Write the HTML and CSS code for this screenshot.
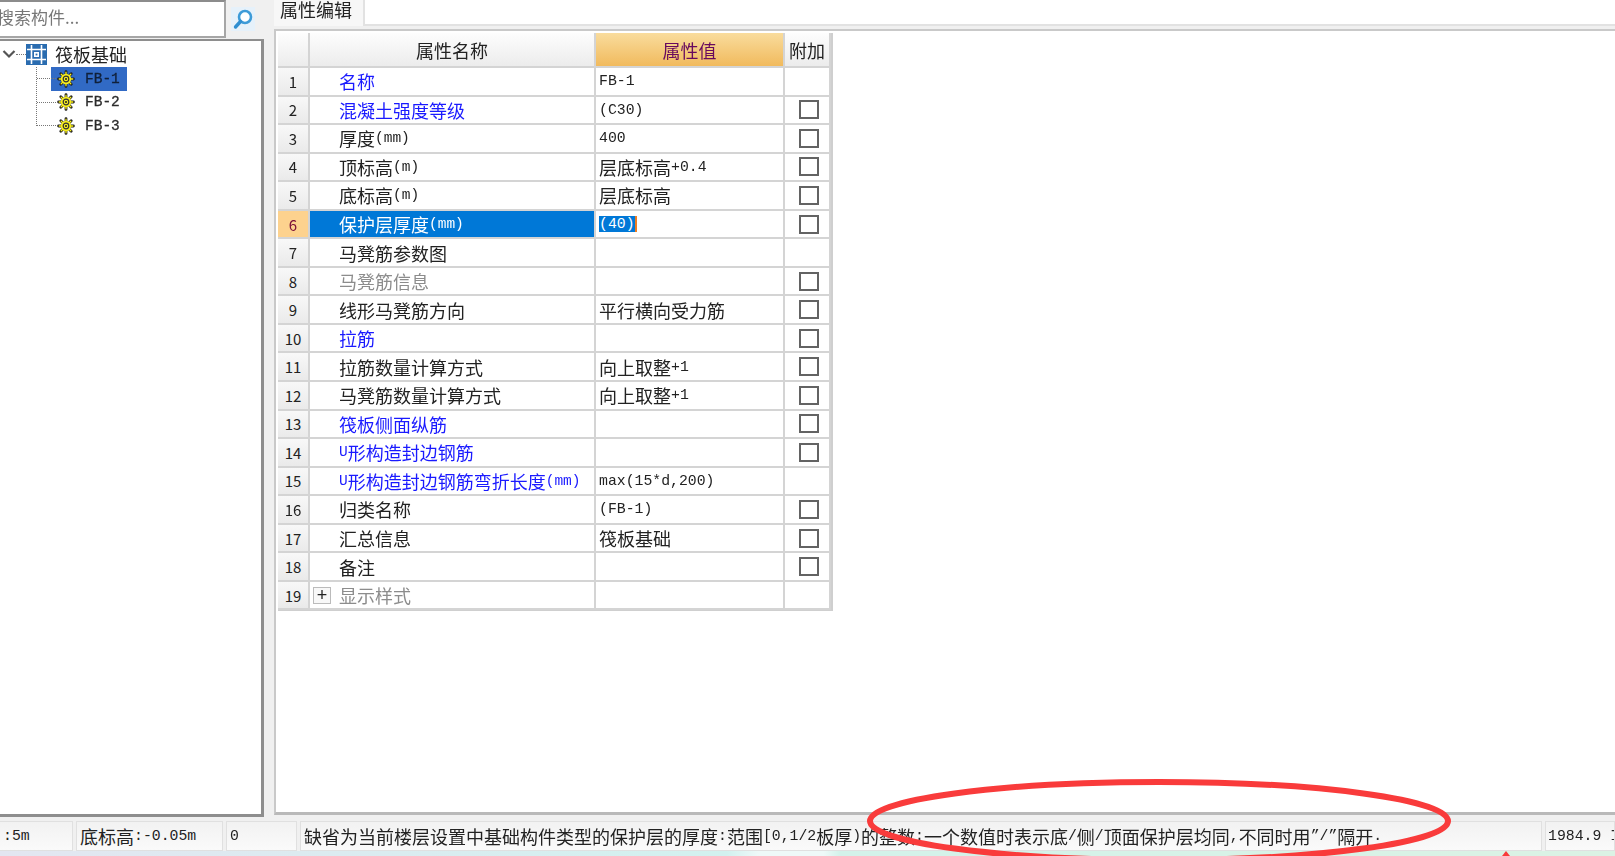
FILE: index.html
```html
<!DOCTYPE html>
<html lang="zh-CN">
  <head>
    <meta charset="UTF-8" />
    <title>属性编辑</title>
    <link rel="stylesheet" href="styles.css">
  </head>
  <body>
    <svg class="defs" width="0" height="0">
      <symbol id="gear" viewBox="0 0 18 18">
        <g stroke="#1a1a1a" stroke-width="2.8" stroke-linecap="round">
          <path d="M9 1.6v14.8M1.6 9h14.8M3.8 3.8l10.4 10.4M14.2 3.8L3.8 14.2" />
        </g>
        <g stroke="#f7ee1e" stroke-width="1.3" stroke-linecap="round">
          <path d="M9 2.2v13.6M2.2 9h13.6M4.2 4.2l9.6 9.6M13.8 4.2l-9.6 9.6" />
        </g>
        <circle cx="9" cy="9" r="5.2" fill="#f7ee1e" />
        <circle cx="9" cy="9" r="2.8" fill="none" stroke="#333" stroke-width="1.2" />
        <circle cx="9" cy="9" r="1" fill="#1a1a1a" />
      </symbol>
    </svg>

    <div class="app">
      <div class="main">
        <div class="side">
          <div class="search-bar">
            <div class="search-input">搜索构件...</div>
            <svg class="search-icon" width="24" height="24" viewBox="0 0 24 24">
              <rect width="24" height="24" fill="#e6f1fa" />
              <circle cx="14" cy="10" r="6" fill="#fff" stroke="#3d9bd8" stroke-width="2.6" />
              <path d="M9.5 14.5L4.5 20" stroke="#2f8ed0" stroke-width="3.4" stroke-linecap="round" />
            </svg>
          </div>
          <div class="tree">
            <div class="tree-root">
              <svg class="chevron" width="14" height="10" viewBox="0 0 14 10">
                <path d="M1.5 2L7 7.5L12.5 2" fill="none" stroke="#555" stroke-width="2.2" />
              </svg>
              <span class="dots-short"></span>
              <svg class="root-icon" width="21" height="21" viewBox="0 0 21 21">
                <rect width="21" height="21" fill="#2a6cb0" />
                <path d="M1 5.5h19M1 15.5h19M5.5 1v19M15.5 1v19" stroke="#fff" stroke-width="1.6" />
                <path d="M8 8h5v5H8z" fill="#fff" />
                <path d="M9.6 9.6h1.8v1.8H9.6z" fill="#2a6cb0" />
              </svg>
              <span class="root-label">筏板基础</span>
            </div>
            <ul class="tree-list">
              <li class="tree-item selected">
                <svg class="gear" width="18" height="18"><use href="#gear" /></svg>
                <span>FB-1</span>
              </li>
              <li class="tree-item">
                <svg class="gear" width="18" height="18"><use href="#gear" /></svg>
                <span>FB-2</span>
              </li>
              <li class="tree-item">
                <svg class="gear" width="18" height="18"><use href="#gear" /></svg>
                <span>FB-3</span>
              </li>
            </ul>
          </div>
        </div>

        <div class="panel">
          <div class="tabs">
            <div class="tab">属性编辑</div>
          </div>
          <div class="sheet">
            <div class="prop-table">
              <div class="hd"></div>
              <div class="hd">属性名称</div>
              <div class="hd hd-active">属性值</div>
              <div class="hd">附加</div>

              <div class="num">1</div>
              <div class="name blue">名称</div>
              <div class="val lat">FB-1</div>
              <div class="extra"></div>

              <div class="num">2</div>
              <div class="name blue">混凝土强度等级</div>
              <div class="val lat">(C30)</div>
              <div class="extra"><i class="check"></i></div>

              <div class="num">3</div>
              <div class="name">厚度<span class="unit">(mm)</span></div>
              <div class="val lat">400</div>
              <div class="extra"><i class="check"></i></div>

              <div class="num">4</div>
              <div class="name">顶标高<span class="unit">(m)</span></div>
              <div class="val">层底标高<span class="lat">+0.4</span></div>
              <div class="extra"><i class="check"></i></div>

              <div class="num">5</div>
              <div class="name">底标高<span class="unit">(m)</span></div>
              <div class="val">层底标高</div>
              <div class="extra"><i class="check"></i></div>

              <div class="num num-active">6</div>
              <div class="name name-active">保护层厚度<span class="unit">(mm)</span></div>
              <div class="val lat"><span class="picked">(40)</span></div>
              <div class="extra"><i class="check"></i></div>

              <div class="num">7</div>
              <div class="name">马凳筋参数图</div>
              <div class="val"></div>
              <div class="extra"></div>

              <div class="num">8</div>
              <div class="name gray">马凳筋信息</div>
              <div class="val"></div>
              <div class="extra"><i class="check"></i></div>

              <div class="num">9</div>
              <div class="name">线形马凳筋方向</div>
              <div class="val">平行横向受力筋</div>
              <div class="extra"><i class="check"></i></div>

              <div class="num">10</div>
              <div class="name blue">拉筋</div>
              <div class="val"></div>
              <div class="extra"><i class="check"></i></div>

              <div class="num">11</div>
              <div class="name">拉筋数量计算方式</div>
              <div class="val">向上取整<span class="lat">+1</span></div>
              <div class="extra"><i class="check"></i></div>

              <div class="num">12</div>
              <div class="name">马凳筋数量计算方式</div>
              <div class="val">向上取整<span class="lat">+1</span></div>
              <div class="extra"><i class="check"></i></div>

              <div class="num">13</div>
              <div class="name blue">筏板侧面纵筋</div>
              <div class="val"></div>
              <div class="extra"><i class="check"></i></div>

              <div class="num">14</div>
              <div class="name blue"><span class="unit">U</span>形构造封边钢筋</div>
              <div class="val"></div>
              <div class="extra"><i class="check"></i></div>

              <div class="num">15</div>
              <div class="name blue"><span class="unit">U</span>形构造封边钢筋弯折长度<span class="unit">(mm)</span></div>
              <div class="val lat">max(15*d,200)</div>
              <div class="extra"></div>

              <div class="num">16</div>
              <div class="name">归类名称</div>
              <div class="val lat">(FB-1)</div>
              <div class="extra"><i class="check"></i></div>

              <div class="num">17</div>
              <div class="name">汇总信息</div>
              <div class="val">筏板基础</div>
              <div class="extra"><i class="check"></i></div>

              <div class="num">18</div>
              <div class="name">备注</div>
              <div class="val"></div>
              <div class="extra"><i class="check"></i></div>

              <div class="num">19</div>
              <div class="name gray name-expand"><span class="expander">+</span>显示样式</div>
              <div class="val"></div>
              <div class="extra"></div>
            </div>
          </div>
        </div>
      </div>

      <div class="status">
        <div class="st st-1"><span class="lat">:5m</span></div>
        <div class="st st-2">底标高<span class="lat">:-0.05m</span></div>
        <div class="st st-3"><span class="lat">0</span></div>
        <div class="st st-4">缺省为当前楼层设置中基础构件类型的保护层的厚度<span class="lat">:</span>范围<span class="lat">[0,1/2</span>板厚<span class="lat">)</span>的整数<span class="lat">:</span>一个数值时表示底<span class="lat">/</span>侧<span class="lat">/</span>顶面保护层均同<span class="lat">,</span>不同时用<span class="lat">”/”</span>隔开<span class="lat">.</span></div>
        <div class="st st-5"><span class="lat">1984.9 I</span></div>
      </div>
      <div class="desktop-strip"></div>
    </div>

    <svg class="mark" width="1615" height="856" viewBox="0 0 1615 856">
      <ellipse cx="1159" cy="821" rx="289" ry="39" fill="none" stroke="#f93b3b" stroke-width="6" />
      <path d="M1502 856l4-5 4 5z" fill="#f93b3b" />
    </svg>
  </body>
</html>
```

FILE: styles.css
```css
* {
  box-sizing: border-box;
}

body {
  margin: 0;
  background-color: #f0f0f0;
  font-family: "Noto Sans CJK SC", "Noto Sans", sans-serif;
  font-size: 17px;
  color: #222;
  overflow: hidden;
}

.defs {
  position: absolute;
}

.app {
  width: 1615px;
  height: 856px;
  display: flex;
  flex-direction: column;
  overflow: hidden;
  filter: blur(0.35px);
}

.lat,
.unit {
  font-family: "Liberation Mono", monospace;
}

.lat {
  font-size: 14.8px;
}

.unit {
  font-size: 14.5px;
}

.main {
  flex: 1;
  display: flex;
  min-height: 0;
}

/* Left column: search and tree */
.side {
  width: 274px;
  padding: 0 10px 4px 0;
  display: flex;
  flex-direction: column;
}

.search-bar {
  height: 39px;
  display: flex;
  align-items: flex-start;
}

.search-input {
  width: 228px;
  height: 38px;
  margin-left: -2px;
  background-color: #fff;
  border: 2px solid #a6a6a6;
  border-top-color: #8c8c8c;
  color: #777;
  font-size: 17px;
  line-height: 30px;
  text-indent: -3px;
  white-space: nowrap;
}

.search-icon {
  margin: 7px 0 0 5px;
}

.tree {
  flex: 1;
  background-color: #fff;
  border-top: 2px solid #8e8e8e;
  border-right: 3px solid #8e8e8e;
  border-bottom: 3px solid #8e8e8e;
}

.tree-root {
  height: 26px;
  display: flex;
  align-items: center;
  position: relative;
}

.chevron {
  margin-left: 2px;
}

.dots-short {
  width: 10px;
  border-top: 1px dotted #777;
}

.root-icon {
  margin-right: 8px;
}

.root-label {
  font-size: 18px;
  line-height: 26px;
}

.tree-list {
  list-style: none;
  margin: 0 0 0 36px;
  padding: 0;
  border-left: 1px dotted #777;
  height: 59px;
}

.tree-item {
  height: 23.5px;
  width: 90px;
  padding-left: 20px;
  display: flex;
  align-items: center;
  gap: 10px;
  font-family: "Liberation Mono", monospace;
  font-size: 14.5px;
  -webkit-text-stroke: 0.3px #2b2b2b;
  color: #2b2b2b;
  position: relative;
}

.tree-item::before {
  content: "";
  position: absolute;
  left: 0;
  top: 11px;
  width: 19px;
  border-top: 1px dotted #777;
}

.tree-item.selected {
  background: linear-gradient(#316ac5, #316ac5) 14px 0 / 76px 100% no-repeat;
  color: #10203a;
  -webkit-text-stroke: 0.3px #10203a;
}

.gear {
  flex: none;
}

/* Right column: tab and property table */
.panel {
  flex: 1;
  display: flex;
  flex-direction: column;
  min-width: 0;
  padding-bottom: 6px;
}

.tabs {
  height: 26px;
  background-color: #fff;
  border-bottom: 2px solid #e2e2e2;
  display: flex;
}

.tab {
  width: 91px;
  height: 26px;
  padding-left: 6px;
  background-color: #f7f7f7;
  border-right: 2px solid #e2e2e2;
  font-size: 18px;
  line-height: 18px;
  color: #222;
}

.sheet {
  flex: 1;
  margin: 3px 0 0;
  padding: 2px 0 0 2px;
  background-color: #fff;
  border-top: 2px solid #c9c9c9;
  border-left: 2px solid #c9c9c9;
  border-bottom: 3px solid #b9b9b9;
}

.prop-table {
  width: 555px;
  display: grid;
  grid-template-columns: 32px 286px 189px 46px;
  grid-template-rows: 35px repeat(19, 28.55px);
  border-bottom: 1px solid #cfcfcf;
  border-right: 2px solid #cfcfcf;
}

.prop-table > div {
  display: flex;
  align-items: center;
  border-bottom: 2px solid #d4d4d4;
  border-right: 2px solid #d4d4d4;
  white-space: nowrap;
  overflow: hidden;
}

.prop-table > .hd {
  justify-content: center;
  background: linear-gradient(#fdfdfd, #ececec);
  font-size: 18px;
  color: #222;
}

.prop-table > .hd-active {
  background: linear-gradient(#f9dc9d, #f1ba5d);
  color: #680a5e;
}

.prop-table > .num {
  justify-content: center;
  background: linear-gradient(#f8f8f8, #eaeaea);
  font-size: 15px;
}

.prop-table > .num-active {
  background: #fdd28e;
  color: #7c1038;
}

.name {
  padding-left: 29px;
  font-size: 18px;
}

.blue {
  color: #1a1aff;
}

.gray {
  color: #8c8c8c;
}

.prop-table > .name-active {
  background-color: #0078d7;
  color: #fff;
}

.prop-table > .name-expand {
  padding-left: 3px;
}

.expander {
  width: 18px;
  height: 17px;
  margin-right: 8px;
  background-color: #f8f8f8;
  border: 1px solid #bbb;
  color: #222;
  font-family: "Liberation Sans", sans-serif;
  font-size: 18px;
  line-height: 14px;
  text-align: center;
}

.val {
  padding-left: 3px;
  font-size: 18px;
}

.val.lat {
  font-size: 14.8px;
}

.picked {
  background-color: #0078d7;
  border-right: 2px solid #ef7d22;
  color: #fff;
}

.extra {
  justify-content: center;
  padding-left: 3px;
}

.check {
  width: 20px;
  height: 19px;
  background-color: #fff;
  border: 2px solid #636363;
}

/* Bottom status bar */
.status {
  height: 30px;
  display: flex;
  gap: 3px;
}

.st {
  height: 30px;
  padding-left: 3px;
  display: flex;
  align-items: center;
  background: linear-gradient(#f2f2f2, #fafafa);
  border: 1px solid #e0e0e0;
  font-size: 18px;
  white-space: nowrap;
  overflow: hidden;
}

.st-1 {
  width: 74px;
  margin-left: -1px;
}

.st-2 {
  width: 147px;
}

.st-3 {
  width: 71px;
}

.st-4 {
  width: 1242px;
}

.st-5 {
  flex: 1;
  padding-left: 2px;
}

.desktop-strip {
  height: 5px;
  background: linear-gradient(90deg, #e3e6f1 0, #d2f1ef 45%, #eef9f8 47%, #eef9f8 51%, #d3f2ea 52%, #dbf2e4 100%);
}

/* Hand-drawn red mark over the screenshot */
.mark {
  position: absolute;
  left: 0;
  top: 0;
  pointer-events: none;
}
```
